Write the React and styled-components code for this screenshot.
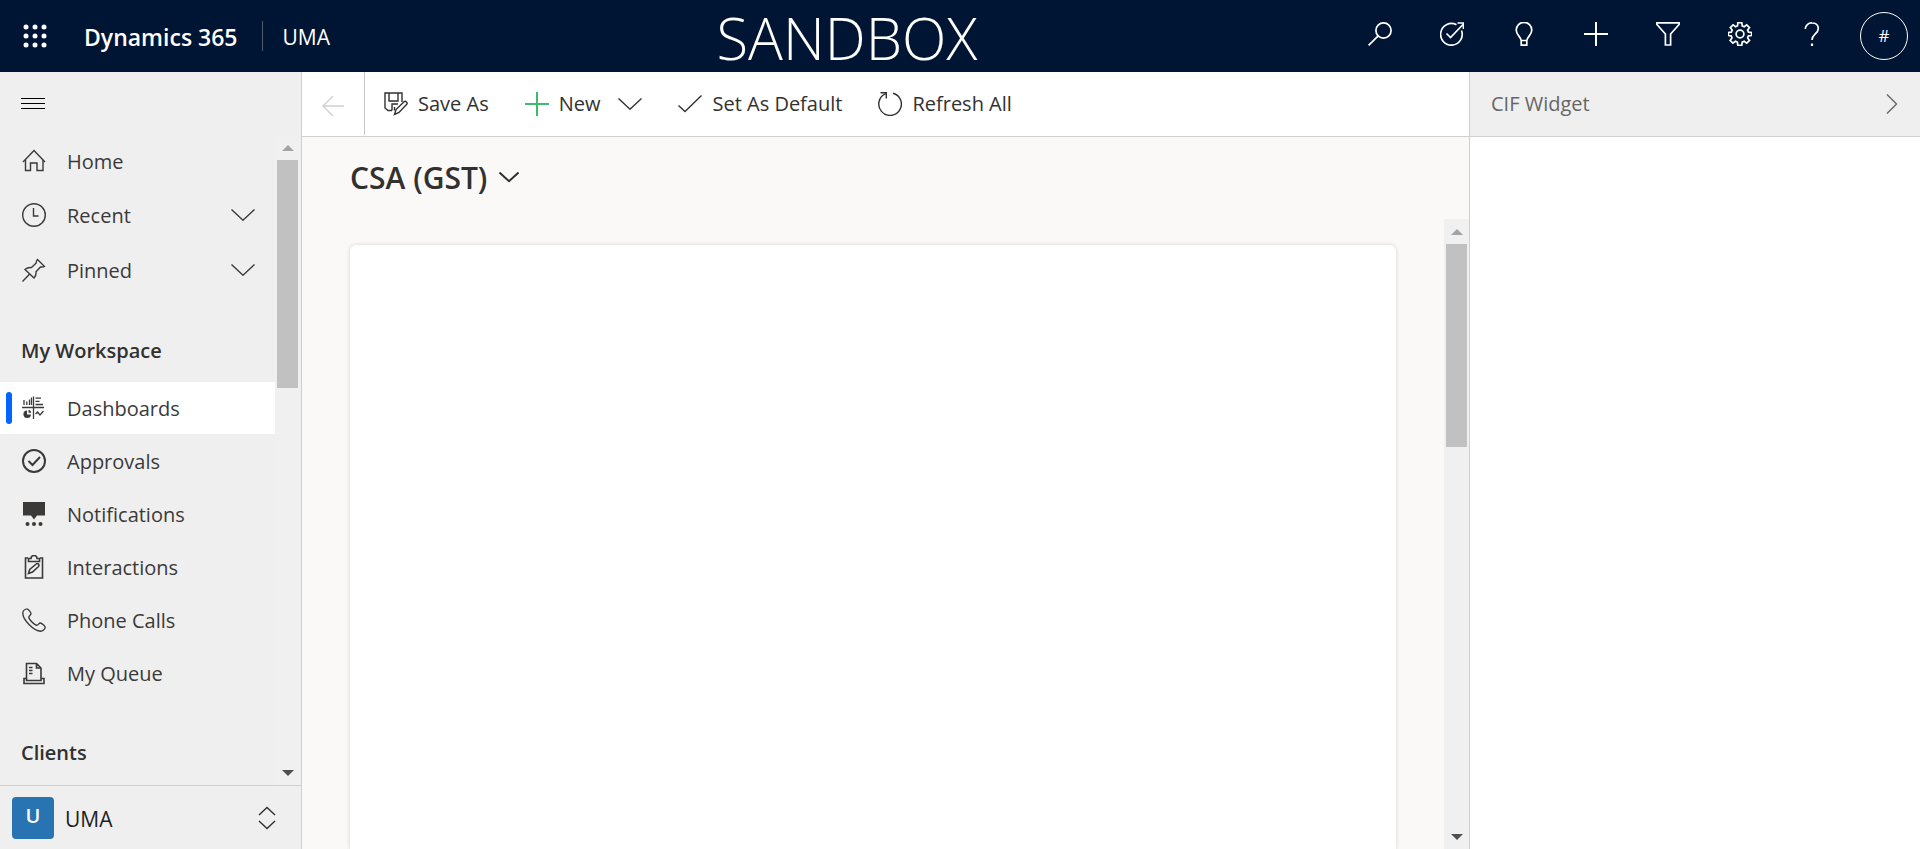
import React from "react";
import styled, { createGlobalStyle } from "styled-components";

const GlobalStyle = createGlobalStyle`
  *, *::before, *::after { box-sizing: border-box; }
  body {
    margin: 0;
    font-family: "Open Sans", "Noto Sans", sans-serif;
    font-size: 20px;
    line-height: 28px;
    color: #323130;
    background: #fff;
  }
  button {
    margin: 0;
    padding: 0;
    border: 0;
    background: none;
    font: inherit;
    color: inherit;
    cursor: pointer;
  }
  a { color: inherit; text-decoration: none; }
  h1, h2, p, ul { margin: 0; padding: 0; font: inherit; }
  ul { list-style: none; }
`;

const Page = styled.div`
  display: flex;
  flex-direction: column;
  height: 100vh;
`;

/* ---------- icons ---------- */

const Svg = styled.svg`
  display: block;
  flex: none;
  width: ${(p) => p.$w || 24}px;
  height: ${(p) => p.$h || 24}px;
  fill: none;
  stroke: currentColor;
  stroke-width: ${(p) => p.$stroke || 1.4};
`;

const Icon = ({ w = 24, h = 24, stroke, children }) => (
  <Svg $w={w} $h={h} $stroke={stroke} viewBox={`0 0 ${w} ${h}`} aria-hidden="true">
    {children}
  </Svg>
);

const WaffleIcon = () => (
  <Icon>
    {[3, 12, 21].map((y) =>
      [3, 12, 21].map((x) => (
        <circle key={`${x}-${y}`} cx={x} cy={y} r="2.5" fill="currentColor" stroke="none" />
      ))
    )}
  </Icon>
);
const SearchIcon = () => (
  <Icon stroke={1.7}>
    <circle cx="15.5" cy="8.5" r="7.6" />
    <path d="M10.2 13.8L0.6 23.4" />
  </Icon>
);
const TargetIcon = () => (
  <Icon stroke={1.7}>
    <path d="M16.5 2.8A10.8 10.8 0 1 0 21.500 8.500" />
    <path d="M6.5 11.5l4 4L23 2.5M17.5 1h6v6" />
  </Icon>
);
const BulbIcon = () => (
  <Icon stroke={1.7}>
    <path d="M9.2 18.5c0-3.4-5-5.4-5-10.4a7.8 7.8 0 0 1 15.6 0c0 5-5 7-5 10.4v4.6H9.2zM9.2 18.5h5.6" />
  </Icon>
);
const PlusIcon = ({ stroke = 2 }) => (
  <Icon stroke={stroke}>
    <path d="M12 0v24M0 12h24" />
  </Icon>
);
const FilterIcon = () => (
  <Icon stroke={1.7}>
    <path d="M0.9 0.9h22.2v1.6L14.6 12v11H9.4V12L0.9 2.5z" />
  </Icon>
);
const GearIcon = () => (
  <Icon stroke={1.7}>
    <path d="M10 0.9h4l0.4 3.1 2 0.9 2.5-1.9 2.8 2.8-1.9 2.5 0.9 2 3.1 0.4v3l-3.1 0.4-0.9 2 1.9 2.5-2.8 2.8-2.5-1.9-2 0.9-0.4 3.1h-4l-0.4-3.1-2-0.9-2.5 1.9-2.8-2.8 1.9-2.5-0.9-2L0.5 13.7v-3l3-0.4 0.9-2-1.9-2.5 2.8-2.8 2.5 1.9 2-0.9z" transform="translate(-.2 -.2)" />
    <circle cx="12" cy="12" r="3.9" />
  </Icon>
);
const HelpIcon = () => (
  <Icon stroke={1.7}>
    <path d="M5.2 7A6.4 6.4 0 0 1 12 0.9c3.7 0 6.3 2.3 6.3 5.6 0 5.4-6.3 5.5-6.3 11.5" />
    <path d="M12 21.5V24" strokeWidth="2.2" />
  </Icon>
);
const MenuIcon = () => (
  <Icon stroke={1}>
    <path d="M0 6.500H24M0 11.500H24M0 16.500H24" />
  </Icon>
);
const BackIcon = () => (
  <Icon>
    <path d="M12 2L2 12l10 10M2 12h21" />
  </Icon>
);
const SaveAsIcon = () => (
  <Icon>
    <path d="M8 18.500H4L1 16V1h17v9M5 1v8h9V1M8 18.500V12h6M10.500 15v3.500" />
    <path d="M10.500 22.500l1.500-5 7.800-7.600a1.900 1.900 0 0 1 2.700 2.700L15 20.500z" />
  </Icon>
);
const ChevronDownIcon = ({ w = 24, stroke = 1.4 }) => (
  <Icon w={w} h={12} stroke={stroke}>
    <path d={`M0.500 0.500L${w / 2} ${w / 2 - 0.8}L${w - 0.5} 0.500`} />
  </Icon>
);
const ChevronRightIcon = () => (
  <Icon w={12} h={20}>
    <path d="M1 0.500L10.500 10L1 19.500" />
  </Icon>
);
const CheckIcon = () => (
  <Icon>
    <path d="M0.500 13.500l6.500 6L23.500 3.500" />
  </Icon>
);
const RefreshIcon = () => (
  <Icon>
    <path d="M15 1.200A11.300 11.300 0 1 1 7.700 1.700" />
    <path d="M2.500 0.700H8.300V6.500" />
  </Icon>
);
const HomeIcon = () => (
  <Icon>
    <path d="M1 13L12 1.500L23 13" />
    <path d="M3.500 11v10.500h5V14h6.500v7.500h6V11" />
  </Icon>
);
const ClockIcon = () => (
  <Icon>
    <circle cx="12" cy="12" r="11.300" />
    <path d="M11.500 5v8h5" />
  </Icon>
);
const PinIcon = () => (
  <Icon>
    <path d="M0.500 23.500l7.700-8M15.500 1.500l7 7c-1.500 0.800-3 0.400-4 0.500l-4.500 4.800c0.300 2.500-0.400 4.500-2 6.200l-9-8.500c1.700-1.700 4-2.200 6.500-2l4.700-4.500c0-1 0.300-2.500 1.300-3.500z" />
  </Icon>
);
const DashboardIcon = () => (
  <Icon stroke={1.3}>
    <path d="M0 11.500H22M11.500 0.500v22.500" />
    <path d="M2 9V4M4.800 9V5.500M7.500 9V3.500M9.500 9V1.500M13.500 2.200h5.500M13.500 5.300h4M13.500 8.500h7.500M13.500 18l2-2 2.500 3 3.500-4" />
    <path d="M5 14.500v4h4A3.800 3.800 0 1 1 5 14.500zM6.500 13.800a3.200 3.200 0 0 1 2.800 3h-2.800z" fill="currentColor" stroke="none" />
  </Icon>
);
const ApprovalIcon = () => (
  <Icon stroke={2}>
    <circle cx="12" cy="12" r="11" />
    <path d="M6.500 12l4 4 7.500-8" />
  </Icon>
);
const NotificationIcon = () => (
  <Icon>
    <path d="M1 0h22v13.500h-8l-3 4-3-4H1z" fill="currentColor" stroke="none" />
    {[5.5, 12, 18.5].map((x) => (
      <circle key={x} cx={x} cy="22" r="2" fill="currentColor" stroke="none" />
    ))}
  </Icon>
);
const InteractionIcon = () => (
  <Icon stroke={1.600}>
    <path d="M6 3H3.500v20h17V3H18" />
    <path d="M6.500 6.500v-3H9a3 3 0 0 1 6 0h2.500v3z" />
    <path d="M6.500 18.500l1.200-4 6.500-5.500a1.700 1.700 0 0 1 2.300 2.500l-6 5.500z" />
  </Icon>
);
const PhoneIcon = () => (
  <Icon>
    <path d="M4.500 0.900C6 0.500 9 4.300 9 5.700c0 1.500-2.300 2-2.200 3.500 0.100 2.200 5.700 7.900 8 8 1.500 0.100 2-2.200 3.500-2.200 1.400 0 5.100 3 4.900 4.500-0.300 1.800-2.500 3.700-4.500 3.700C12 23.200 0.800 12 0.800 5.300c0-2 1.900-4 3.700-4.400z" />
  </Icon>
);
const QueueIcon = () => (
  <Icon stroke={1.600}>
    <path d="M4.500 17V2.500h10l4.500 4.500v10M14.500 2.500V7H19M7 6.500h3.500M7 9.500h3.500M7 12.500h3.500" />
    <path d="M2 17.500h2.500v2h14.500v-2h3v5H2z" />
  </Icon>
);
const SwitchIcon = () => (
  <Icon w={18} h={24}>
    <path d="M1 9L9 1.500L17 9M1 15l8 7.500 8-7.500" />
  </Icon>
);

/* ---------- top bar ---------- */

const TopBar = styled.header`
  display: flex;
  align-items: center;
  height: 72px;
  flex: none;
  padding-right: 12px;
  color: #fff;
  background: #001433;
`;
const Brand = styled.div`
  display: flex;
  align-items: center;
  width: 350px;
`;
const WaffleButton = styled.button`
  display: grid;
  place-items: center;
  width: 70px;
  height: 72px;
`;
const ProductLink = styled.a`
  margin-left: 14px;
  padding: 2px 24px 0 0;
  font-size: 23px;
  font-weight: 600;
`;
const AppLink = styled.a`
  padding: 2px 0 0 20px;
  border-left: 1px solid #4d5b70;
  font-size: 21px;
`;
const EnvironmentName = styled.p`
  flex: 1;
  padding-top: 4px;
  font-size: 58px;
  font-weight: 300;
  line-height: 68px;
  text-align: center;
`;
const Tools = styled.div`
  display: flex;
  align-items: center;
`;
const ToolButton = styled.button`
  display: grid;
  place-items: center;
  width: 72px;
  height: 72px;
  padding-bottom: 4px;
`;
const Profile = styled.button`
  width: 48px;
  height: 48px;
  margin-left: 12px;
  border: 1px solid #fff;
  border-radius: 50%;
  font-size: 17px;
`;

/* ---------- layout ---------- */

const Body = styled.div`
  display: flex;
  flex: 1;
  min-height: 0;
`;
const Sidebar = styled.nav`
  display: flex;
  flex-direction: column;
  flex: none;
  width: 302px;
  background: #efefef;
  border-right: 1px solid #d2d0ce;
`;
const MenuButton = styled.button`
  display: flex;
  align-items: center;
  flex: none;
  height: 63px;
  padding-left: 21px;
  color: #000;
`;
const NavScroller = styled.div`
  display: flex;
  flex: 1;
  min-height: 0;
`;
const NavContent = styled.div`
  flex: 1;
  overflow: hidden;
`;
const NavList = styled.ul`
  display: flex;
  flex-direction: column;
  gap: 1px;
`;
const NavLink = styled.a`
  display: flex;
  align-items: center;
  height: ${(p) => (p.$tall ? 54 : 52)}px;
  padding: 0 20px 0 6px;
  color: #3b3a39;
  background: ${(p) => (p.$active ? "#fff" : "transparent")};
`;
const Marker = styled.span`
  width: 6px;
  height: 32px;
  margin-right: 10px;
  border-radius: 3px;
  background: ${(p) => (p.$active ? "#0066ff" : "transparent")};
`;
const NavLabel = styled.span`
  flex: 1;
  padding: 2px 0 0 21px;
`;
const NavHeading = styled.h2`
  height: 85px;
  padding: 40px 21px 0;
  font-weight: 600;
`;

const AreaSwitcher = styled.button`
  display: flex;
  align-items: center;
  flex: none;
  height: 64px;
  padding: 0 25px 0 12px;
  border-top: 1px solid #d2d0ce;
  text-align: left;
`;
const AreaTile = styled.span`
  width: 42px;
  height: 42px;
  border-radius: 4px;
  color: #fff;
  background: #2874b2;
  font-weight: 600;
  line-height: 38px;
  text-align: center;
`;
const AreaName = styled.span`
  flex: 1;
  padding: 2px 0 0 11px;
  font-size: 21px;
  color: #201f1e;
`;

/* ---------- scroll bar ---------- */

const Track = styled.div`
  display: flex;
  flex-direction: column;
  align-items: center;
  flex: none;
  width: 25px;
  margin-right: ${(p) => p.$inset || 0}px;
  background: #f0f0f0;
`;
const ArrowButton = styled.button`
  display: grid;
  place-items: center;
  width: 25px;
  height: 25px;
  color: ${(p) => (p.$dim ? "#a3a3a3" : "#505050")};
`;
const Rail = styled.div`
  flex: 1;
  width: 21px;
`;
const Thumb = styled.div`
  height: ${(p) => p.$size}%;
  background: #c1c1c1;
`;
const ScrollBar = ({ inset, size }) => (
  <Track $inset={inset}>
    <ArrowButton $dim aria-label="Scroll up">
      <Icon w={12} h={6}><path d="M0 6L6 0l6 6z" fill="currentColor" stroke="none" /></Icon>
    </ArrowButton>
    <Rail><Thumb $size={size} /></Rail>
    <ArrowButton aria-label="Scroll down">
      <Icon w={12} h={6}><path d="M0 0l6 6 6-6z" fill="currentColor" stroke="none" /></Icon>
    </ArrowButton>
  </Track>
);

/* ---------- main ---------- */

const Main = styled.main`
  display: flex;
  flex-direction: column;
  flex: 1;
  min-width: 0;
  background: #faf9f8;
`;
const CommandBar = styled.div`
  display: flex;
  flex: none;
  height: 65px;
  background: #fff;
  border-bottom: 1px solid #d2d0ce;
`;
const BackButton = styled.button`
  display: grid;
  place-items: center;
  width: 63px;
  padding-top: 4px;
  margin-bottom: 1px;
  border-right: 1px solid #c8c6c4;
  color: #d2d0ce;
`;
const Commands = styled.div`
  display: flex;
  align-items: center;
  gap: 36px;
  padding-left: 19px;
`;
const Command = styled.button`
  display: flex;
  align-items: center;
  gap: 10px;
`;
const SplitCommand = styled.div`
  display: flex;
  align-items: center;
  gap: 18px;
`;
const Green = styled.span`
  color: #3fb870;
`;
const ViewTitle = styled.h1`
  flex: none;
  height: 82px;
  padding: 19px 0 0 48px;
`;
const ViewButton = styled.button`
  display: flex;
  align-items: center;
  gap: 12px;
  font-size: 30px;
  font-weight: 600;
  line-height: 44px;
`;
const Content = styled.div`
  display: flex;
  flex: 1;
  min-height: 0;
  overflow: hidden;
`;
const Canvas = styled.div`
  flex: 1;
  padding: 26px 48px 0;
`;
const Card = styled.section`
  height: 100%;
  background: #fff;
  border-radius: 6px 6px 0 0;
  box-shadow: 0 0 4px rgba(0, 0, 0, 0.16);
`;

const Widget = styled.aside`
  flex: none;
  width: 451px;
  background: #fff;
  border-left: 1px solid #d2d0ce;
`;
const WidgetHeader = styled.button`
  display: flex;
  align-items: center;
  justify-content: space-between;
  width: 100%;
  height: 65px;
  padding: 0 22px 0 21px;
  color: #666;
  background: #efefef;
  border-bottom: 1px solid #d2d0ce;
`;

const tools = [
  ["Search", SearchIcon],
  ["Task Flow", TargetIcon],
  ["Assistant", BulbIcon],
  ["Quick create", PlusIcon],
  ["Advanced find", FilterIcon],
  ["Settings", GearIcon],
  ["Help", HelpIcon],
];
const pinned = [
  ["Home", HomeIcon],
  ["Recent", ClockIcon, true],
  ["Pinned", PinIcon, true],
];
const workspace = [
  ["Dashboards", DashboardIcon],
  ["Approvals", ApprovalIcon],
  ["Notifications", NotificationIcon],
  ["Interactions", InteractionIcon],
  ["Phone Calls", PhoneIcon],
  ["My Queue", QueueIcon],
];

const NavItem = ({ label, Glyph, expandable, active }) => (
  <li>
    <NavLink href="#" $tall={expandable} $active={active} aria-current={active ? "page" : undefined}>
      <Marker $active={active} />
      <Glyph />
      <NavLabel>{label}</NavLabel>
      {expandable && <ChevronDownIcon />}
    </NavLink>
  </li>
);

export default function App() {
  return (
    <Page>
      <GlobalStyle />
      <TopBar>
        <Brand>
          <WaffleButton aria-label="App launcher"><WaffleIcon /></WaffleButton>
          <ProductLink href="#">Dynamics 365</ProductLink>
          <AppLink href="#">UMA</AppLink>
        </Brand>
        <EnvironmentName>SANDBOX</EnvironmentName>
        <Tools>
          {tools.map(([label, Glyph]) => (
            <ToolButton key={label} aria-label={label}><Glyph /></ToolButton>
          ))}
          <Profile>#</Profile>
        </Tools>
      </TopBar>
      <Body>
        <Sidebar>
          <MenuButton aria-label="Site map"><MenuIcon /></MenuButton>
          <NavScroller>
            <NavContent>
              <NavList>
                {pinned.map(([label, Glyph, expandable]) => (
                  <NavItem key={label} label={label} Glyph={Glyph} expandable={expandable} />
                ))}
              </NavList>
              <NavHeading>My Workspace</NavHeading>
              <NavList>
                {workspace.map(([label, Glyph]) => (
                  <NavItem key={label} label={label} Glyph={Glyph} active={label === "Dashboards"} />
                ))}
              </NavList>
              <NavHeading>Clients</NavHeading>
            </NavContent>
            <ScrollBar inset={1} size={38} />
          </NavScroller>
          <AreaSwitcher>
            <AreaTile>U</AreaTile>
            <AreaName>UMA</AreaName>
            <SwitchIcon />
          </AreaSwitcher>
        </Sidebar>
        <Main>
          <CommandBar>
            <BackButton aria-label="Back"><BackIcon /></BackButton>
            <Commands>
              <Command><SaveAsIcon />Save As</Command>
              <SplitCommand>
                <Command><Green><PlusIcon /></Green>New</Command>
                <Command aria-label="More new options"><ChevronDownIcon /></Command>
              </SplitCommand>
              <Command><CheckIcon />Set As Default</Command>
              <Command><RefreshIcon />Refresh All</Command>
            </Commands>
          </CommandBar>
          <ViewTitle>
            <ViewButton>CSA (GST)<ChevronDownIcon w={20} stroke={2} /></ViewButton>
          </ViewTitle>
          <Content>
            <Canvas><Card /></Canvas>
            <ScrollBar size={35} />
          </Content>
        </Main>
        <Widget>
          <WidgetHeader>CIF Widget<ChevronRightIcon /></WidgetHeader>
        </Widget>
      </Body>
    </Page>
  );
}
